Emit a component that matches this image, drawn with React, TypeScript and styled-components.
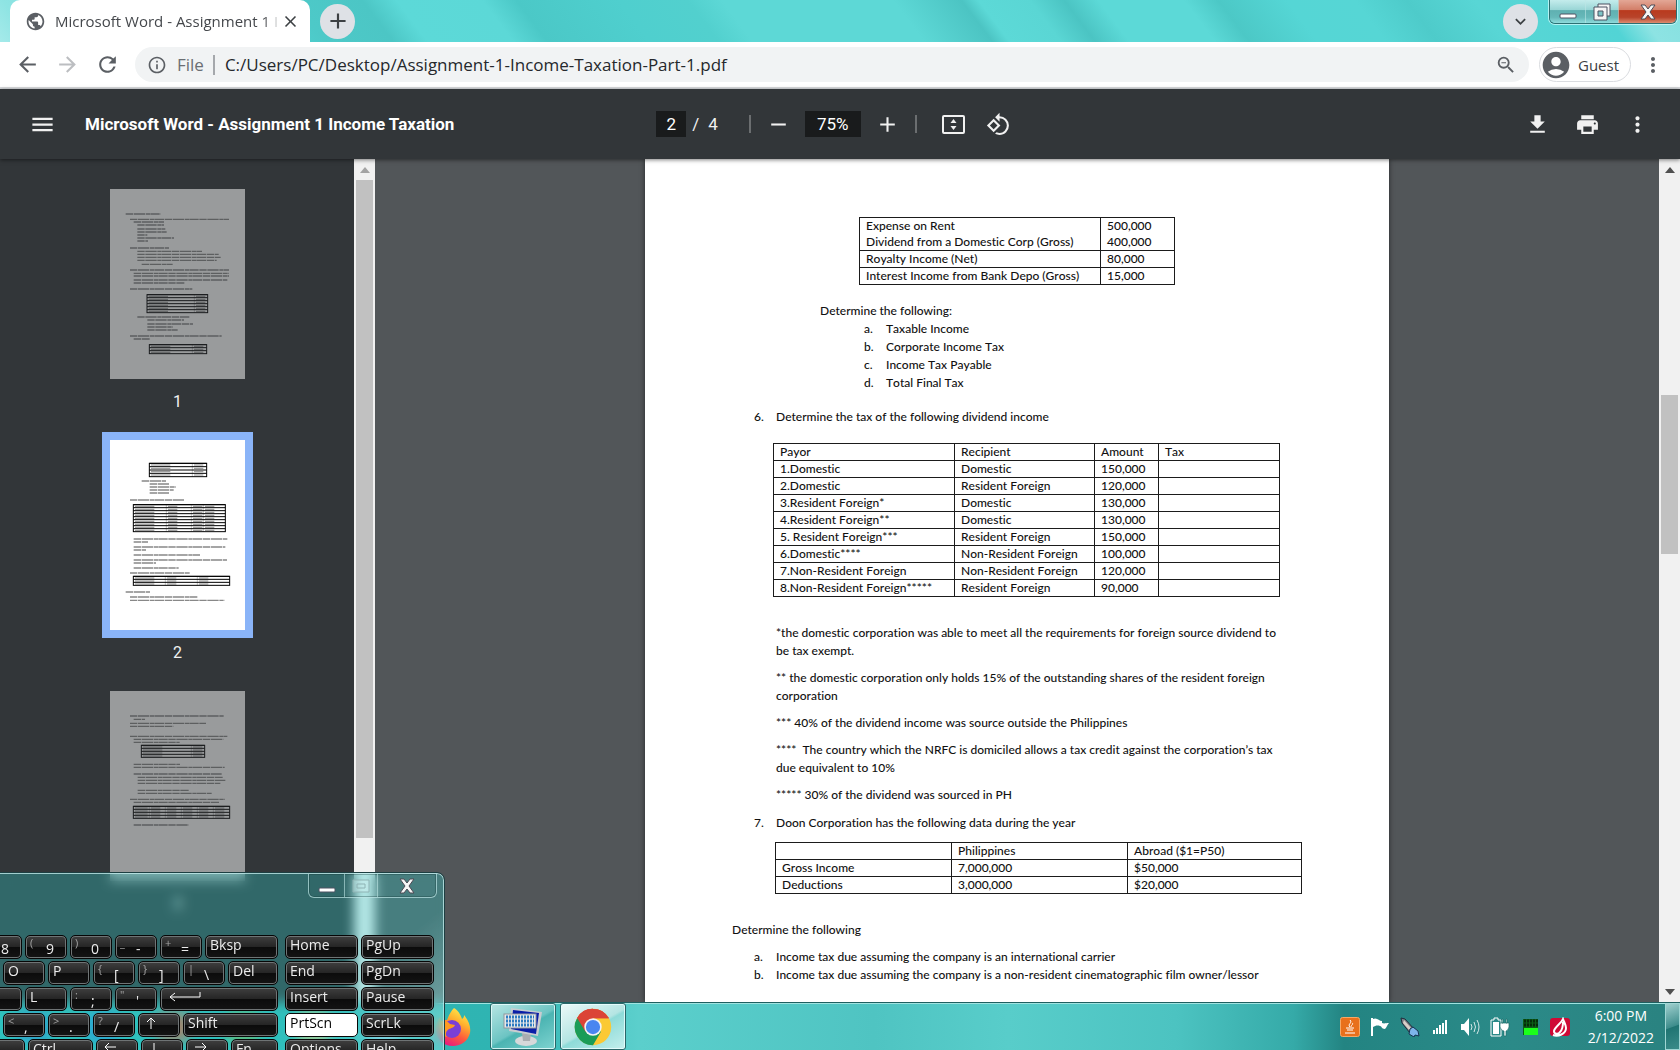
import React from "react";
import styled, { createGlobalStyle, css } from "styled-components";
import {
  MdAccountCircle,
  MdAdd,
  MdArrowBack,
  MdArrowForward,
  MdClose,
  MdInfoOutline,
  MdKeyboardArrowDown,
  MdMenu,
  MdMoreVert,
  MdPrint,
  MdPublic,
  MdRefresh,
  MdRemove,
  MdZoomOut,
} from "react-icons/md";

const uiFont = '"Open Sans", "Noto Sans", sans-serif';
const pdfFont = 'Roboto, "Liberation Sans", sans-serif';
const docFont = 'Lato, "Liberation Sans", sans-serif';

const GlobalStyle = createGlobalStyle`
  *, *::before, *::after { box-sizing: border-box; }
  body { margin: 0; overflow: hidden; font-family: ${uiFont}; }
  button, input { font: inherit; color: inherit; }
  button { border: 0; padding: 0; background: none; }
  h1, p, ol { margin: 0; padding: 0; font-weight: inherit; }
  ol { list-style: none; }
  svg { display: block; flex: none; }
`;

const Screen = styled.div`
  position: relative;
  display: flex;
  flex-direction: column;
  height: 100vh;
  overflow: hidden;
`;

/* ---------- browser frame ---------- */

const TabStrip = styled.header`
  display: flex;
  align-items: center;
  height: 42px;
  padding: 0 142px 0 10px;
  flex: none;
  background: linear-gradient(
    53deg,
    #a5eaea 0%,
    #8ee4e3 2%,
    #4fd0cf 17%,
    #4dc9c8 19%,
    #4cc6c5 23%,
    #5cd9d8 25%,
    #5cd8d7 30%,
    #4bc8c7 32%,
    #4fcfce 38%,
    #52d0ce 42%,
    #5dd8d6 44%,
    #5dd8d6 54%,
    #4cc4c3 58%,
    #5cd9d7 59%,
    #5ad6d4 62%,
    #4bc4c3 64%,
    #5cd9d7 66%,
    #5cd9d7 71%,
    #4cc8c6 73%,
    #55d6d5 77%,
    #56d6d5 81%,
    #4ecbca 84%,
    #58d6d5 88%,
    #52d4d5 95%,
    #8de3e3 97%,
    #86e0e0 100%
  );
`;

const Tab = styled.div`
  display: flex;
  align-items: center;
  width: 300px;
  height: 42px;
  padding: 0 10px 0 15px;
  background: #fff;
  border-radius: 10px 10px 0 0;
  color: #45484c;
  font-size: 15px;
  line-height: 20px;
`;

const TabTitle = styled.span`
  flex: 1;
  margin-left: 9px;
  white-space: nowrap;
  mask-image: linear-gradient(90deg, #000 92%, transparent 100%);
`;

const RoundButton = styled.button`
  display: grid;
  place-items: center;
  width: 35px;
  height: 35px;
  border-radius: 50%;
  background: #dee1e6;
  color: #3c4043;
`;

const NewTab = styled(RoundButton)`
  margin: 0 auto 0 10px;
`;

const CaptionGroup = styled.div<{ $faint?: boolean }>`
  position: absolute;
  top: 0;
  right: ${(p) => (p.$faint ? 6 : 3)}px;
  display: flex;
  height: 24px;
  border: 1px solid ${(p) => (p.$faint ? "rgba(190,230,230,.7)" : "#2c6f72")};
  border-top: 0;
  border-radius: 0 0 6px 6px;
  overflow: hidden;
  box-shadow: ${(p) => (p.$faint ? "inset 0 0 0 1px rgba(20,60,60,.35)" : "0 0 0 1px rgba(220,255,255,.7)")};
`;

const CaptionButton = styled.button<{ $width: number; $tone?: "red" | "clear" }>`
  display: grid;
  place-items: center;
  width: ${(p) => p.$width}px;
  & + & { border-left: 1px solid ${(p) => (p.$tone === "clear" ? "rgba(190,230,230,.6)" : "#3a7f82")}; }
  background: ${(p) =>
    p.$tone === "red"
      ? "linear-gradient(#e3a796, #d37f69 42%, #b93a1e 46%, #b8432a 75%, #dc8c70)"
      : p.$tone === "clear"
        ? "none"
        : "linear-gradient(#c4ecec, #9ad6d6 42%, #5fb0b1 46%, #66b8b9 75%, #8fdcdc)"};
`;

const AddressBar = styled.nav`
  display: flex;
  align-items: center;
  height: 47px;
  padding: 0 15px;
  flex: none;
  background: #fff;
  border-bottom: 2px solid #d9dbde;
  color: #5b5f64;
`;

const NavButtons = styled.div`
  display: flex;
  gap: 15px;
  margin-right: 15px;
`;

const IconButton = styled.button<{ $muted?: boolean }>`
  display: grid;
  place-items: center;
  min-width: 25px;
  height: 26px;
  color: ${(p) => (p.$muted ? "#bcbec1" : "inherit")};
`;

const Omnibox = styled.label`
  display: flex;
  align-items: center;
  flex: 1;
  height: 35px;
  padding: 0 12px;
  border-radius: 18px;
  background: #f1f3f4;
  font-size: 17px;
  line-height: 24px;
`;

const Scheme = styled.span`
  padding: 0 9px 0 10px;
  border-right: 2px solid #a5a8ac;
  line-height: 20px;
  color: #6a6e73;
`;

const UrlInput = styled.input`
  flex: 1;
  min-width: 0;
  padding: 0 0 0 10px;
  border: 0;
  background: none;
  color: #25282c;
`;

const Profile = styled.button`
  display: flex;
  align-items: center;
  gap: 6px;
  width: 92px;
  height: 35px;
  margin: 0 9px 0 10px;
  border: 1px solid #dadce0;
  border-radius: 18px;
  font-size: 15px;

  span { color: #3c4043; }
`;

/* ---------- pdf viewer ---------- */

const PdfToolbar = styled.div`
  position: relative;
  z-index: 1;
  display: grid;
  grid-template-columns: 1fr auto 1fr;
  align-items: center;
  height: 70px;
  padding: 0 30px 0 29px;
  flex: none;
  background: #323639;
  box-shadow: 0 1px 4px rgba(0, 0, 0, 0.5);
  color: #f1f1f1;
  font-family: ${pdfFont};
  font-size: 17px;
`;

const ToolGroup = styled.div<{ $gap: number; $end?: boolean }>`
  display: flex;
  align-items: center;
  gap: ${(p) => p.$gap}px;
  justify-content: ${(p) => (p.$end ? "flex-end" : "flex-start")};
`;

const CentreTools = styled(ToolGroup)`
  padding-right: 12px;
`;

const ViewTools = styled(ToolGroup)`
  padding-left: 9px;
`;

const DocTitle = styled.h1`
  font-size: 17px;
  font-weight: 700;
  line-height: 24px;
  color: #fff;
  white-space: nowrap;
`;

const ToolInput = styled.input<{ $width: number }>`
  width: ${(p) => p.$width}px;
  height: 26px;
  padding: 0;
  border: 0;
  background: #191b1c;
  color: #fff;
  text-align: center;
`;

const PageCount = styled.span`
  display: flex;
  gap: 9px;
  margin: 0 16px 0 -8px;
`;

const Rule = styled.span`
  width: 2px;
  height: 18px;
  margin: 0 1px;
  background: #6b6e70;
`;

const Viewer = styled.div`
  display: flex;
  flex: 1;
  min-height: 0;
  background: #525659;
`;

const Sidebar = styled.aside`
  width: 354px;
  flex: none;
  padding: 22px 0 0 102px;
  overflow: hidden;
  background: #323639;
`;

const ThumbItem = styled.figure`
  width: 151px;
  margin: 0 0 15px;
  color: #f1f1f1;
  font-family: ${pdfFont};
  font-size: 16px;
  line-height: 30px;
  text-align: center;
`;

const ThumbFrame = styled.div<{ $current?: boolean }>`
  padding: 8px;
  background: ${(p) => (p.$current ? "#8ab4f8" : "none")};
  svg { background: #fff; opacity: ${(p) => (p.$current ? 1 : 0.5)}; }
`;

const Scrollbar = styled.div<{ $arrow: string }>`
  display: flex;
  flex-direction: column;
  align-items: center;
  width: 21px;
  flex: none;
  background: #f1f1f1;
  color: ${(p) => p.$arrow};
`;

const ScrollArrow = styled.button`
  display: grid;
  place-items: center;
  width: 21px;
  height: 21px;
  flex: none;
`;

const ScrollTrack = styled.div`
  flex: 1;
  width: 17px;
`;

const ScrollThumb = styled.div`
  background: #c1c1c1;
`;

const PageArea = styled.main`
  flex: 1;
  display: flex;
  justify-content: center;
  overflow: hidden;
`;

const Page = styled.article`
  width: 744px;
  flex: none;
  padding: 58px 87px 0;
  background: #fff;
  box-shadow: 0 0 5px rgba(0, 0, 0, 0.55);
  color: #111;
  font-family: ${docFont};
  font-size: 12px;
  font-weight: 500;
  font-kerning: none;
  font-variant-ligatures: none;
  line-height: 18px;
`;

const Table = styled.table<{ $left: number; $top?: number }>`
  margin: ${(p) => p.$top ?? 0}px 0 0 ${(p) => p.$left}px;
  table-layout: fixed;
  border-collapse: collapse;
  line-height: 16px;
  td, th {
    height: 17px;
    padding: 0 0 0 6px;
    border: 1px solid #1b1b1b;
    font-weight: inherit;
    text-align: left;
    white-space: nowrap;
  }
`;

const Line = styled.p<{ $top: number; $left?: number }>`
  margin: ${(p) => p.$top}px 0 0 ${(p) => p.$left ?? 0}px;
`;

const List = styled.ol<{ $left: number; $top?: number }>`
  margin: ${(p) => p.$top ?? 0}px 0 0 ${(p) => p.$left}px;
  li { display: flex; white-space: nowrap; }
  li > span { width: 22px; flex: none; }
`;

const Notes = styled.div`
  display: flex;
  flex-direction: column;
  gap: 9px;
  margin: 27px 0 0 44px;
  p { white-space: pre; }
`;

/* ---------- taskbar ---------- */

const Taskbar = styled.footer`
  display: flex;
  align-items: center;
  height: 48px;
  flex: none;
  border-top: 1px solid #1f5f60;
  box-shadow: inset 0 1px 0 #9fe3e0;
  background: linear-gradient(90deg, #2fb8b5 0, #2fb4b2 30%, #5bcfcc 38%, #4fc4c2 52%, #58cdca 60%, #4cc3c1 70%, #35aaa8 77%, #238482 80%, #2b8a88 90%, #2a8280 100%);
  color: #fff;
`;

const TaskItem = styled.button<{ $open?: boolean; $active?: boolean }>`
  display: grid;
  place-items: center;
  width: 66px;
  height: 47px;
  margin-right: 4px;
  border-radius: 3px;
  ${(p) =>
    p.$open &&
    css`
      border: 1px solid #2a6668;
      box-shadow: inset 0 0 0 1px rgba(235, 255, 255, 0.8);
      background: ${p.$active
        ? "linear-gradient(150deg, #ecf9f8 0, #b4e5e3 50%, #8edbd8 54%, #c4efed 100%)"
        : "linear-gradient(150deg, #b8e6e4 0, #6cc4c3 50%, #4bb4b2 54%, #7fd4d1 100%)"};
    `}
`;

const Tray = styled.div`
  display: flex;
  align-items: center;
  gap: 10px;
  margin-left: auto;
  height: 100%;
`;

const Clock = styled.time`
  display: flex;
  flex-direction: column;
  align-items: center;
  margin: 0 1px 0 8px;
  font-size: 14px;
  line-height: 22px;
`;

const ShowDesktop = styled.button`
  width: 15px;
  height: 47px;
  border: 1px solid #9fd6d4;
  background: linear-gradient(160deg, #9fcfce, #3d8d8c 50%, #1f7472 52%, #3a8c8a);
`;

/* ---------- on-screen keyboard ---------- */

const Keyboard = styled.section`
  position: absolute;
  left: 0;
  bottom: 0;
  width: 444px;
  height: 177px;
  padding: 61px 9px 0 0;
  overflow: hidden;
  border: solid rgba(200, 240, 240, 0.75);
  border-width: 1px 1px 0 0;
  border-radius: 0 7px 0 0;
  outline: 1px solid #1d3f42;
  background: linear-gradient(140deg, rgba(50, 212, 208, 0) 74%, rgba(230, 255, 255, 0.22) 90%), rgba(50, 212, 208, 0.32);
  backdrop-filter: blur(6px);
`;

const KeyGrid = styled.div`
  display: flex;
  justify-content: flex-end;
  gap: 7px;
`;

const KeyBlock = styled.div<{ $width: number }>`
  display: flex;
  flex-direction: column;
  gap: 2px;
  width: ${(p) => p.$width}px;
  flex: none;
`;

const KeyRow = styled.div`
  display: flex;
  justify-content: flex-end;
  gap: 3px;
`;

const KeyCap = styled.button<{ $width: number; $lit?: boolean }>`
  display: flex;
  align-items: flex-start;
  width: ${(p) => p.$width}px;
  height: 24px;
  padding: 0 4px;
  flex: none;
  border: 1px solid #060606;
  border-radius: 5px;
  box-shadow: inset 0 0 0 1px ${(p) => (p.$lit ? "#fff" : "#6f7475")};
  background: ${(p) => (p.$lit ? "#fff" : "linear-gradient(#3f3f3f, #262626 48%, #0c0c0c 52%, #141414)")};
  color: ${(p) => (p.$lit ? "#000" : "#ececec")};
  font-size: 14px;
  line-height: 17px;
  white-space: nowrap;

  small {
    width: 16px;
    font-size: 11px;
    line-height: 14px;
    color: #a5a5a5;
    text-align: left;
  }
  sub {
    align-self: flex-end;
    line-height: 18px;
    vertical-align: baseline;
    font-size: 14px;
  }
`;

/* ---------- drawings ---------- */

type Seg = [number, number, number];
type Grid = { x: number; y: number; w: number; rows: number; step: number; cols: number[] };

const pageOne: Seg[] = [
  [47, 75, 105], [60, 91, 297], [71, 99, 91], [82, 108, 80], [82, 120, 84], [82, 129, 88], [82, 138, 30],
  [82, 147, 110], [82, 156, 32], [60, 177, 117], [82, 187, 194], [82, 196, 244], [82, 205, 250], [82, 214, 238],
  [95, 226, 93], [60, 243, 297], [71, 253, 285], [71, 261, 286], [71, 273, 282], [71, 282, 152], [60, 300, 187],
  [82, 384, 156], [112, 393, 110], [112, 405, 137], [112, 414, 76], [112, 423, 91], [60, 441, 275], [71, 450, 48],
];
const pageTwo: Seg[] = [
  [95, 123, 73], [119, 132, 59], [119, 141, 78], [119, 150, 72], [119, 159, 60], [60, 180, 164], [71, 297, 282],
  [71, 306, 43], [71, 321, 275], [71, 330, 37], [71, 345, 199], [71, 360, 280], [71, 369, 67], [71, 384, 135],
  [60, 399, 180], [47, 456, 73], [60, 471, 202], [60, 481, 283],
];
const pageThree: Seg[] = [
  [60, 75, 281], [71, 85, 34], [60, 97, 228], [60, 106, 130], [60, 136, 292], [71, 145, 269], [71, 154, 138],
  [71, 220, 139], [71, 229, 273], [71, 249, 264], [83, 259, 255], [83, 268, 263], [83, 277, 248], [83, 298, 153],
  [83, 307, 222], [60, 325, 284], [71, 334, 256], [71, 402, 165],
];
const gridsOne: Grid[] = [
  { x: 111, y: 317, w: 182, rows: 6, step: 9, cols: [142] },
  { x: 118, y: 467, w: 172, rows: 3, step: 9, cols: [129] },
];
const gridsTwo: Grid[] = [
  { x: 118, y: 70, w: 172, rows: 4, step: 10, cols: [129] },
  { x: 70, y: 194, w: 276, rows: 9, step: 9, cols: [99, 174, 210] },
  { x: 70, y: 409, w: 289, rows: 3, step: 9, cols: [96, 192] },
];
const gridsThree: Grid[] = [
  { x: 94, y: 163, w: 190, rows: 4, step: 9, cols: [150] },
  { x: 70, y: 346, w: 289, rows: 4, step: 9, cols: [48, 96, 144, 192, 240] },
];

function Miniature({ lines, grids }: { lines: Seg[]; grids: Grid[] }) {
  return (
    <svg width="135" height="190" viewBox="0 0 405 570" aria-hidden="true">
      {lines.map(([x, y, w], i) => (
        <path key={i} d={`M${x} ${y}h${w}`} stroke="#111" strokeOpacity=".5" strokeWidth="4" strokeDasharray="22 2 34 2 13 1 28 2" />
      ))}
      {grids.map((g, i) => (
        <g key={i} stroke="#000" strokeWidth="3" fill="none">
          <rect x={g.x} y={g.y} width={g.w} height={g.rows * g.step} />
          {Array.from({ length: g.rows }, (_, r) => (
            <React.Fragment key={r}>
              <path d={`M${g.x} ${g.y + r * g.step}h${g.w}`} />
              {[0, ...g.cols].map((c, k) => (
                <path
                  key={k}
                  d={`M${g.x + c + 5} ${g.y + r * g.step + 5}h${k === 0 ? Math.min(58, g.cols[0] - 10) : 28}`}
                  strokeOpacity=".45"
                />
              ))}
            </React.Fragment>
          ))}
          {g.cols.map((c) => (
            <path key={c} d={`M${g.x + c} ${g.y}v${g.rows * g.step}`} strokeWidth="2" strokeOpacity=".35" />
          ))}
        </g>
      ))}
    </svg>
  );
}

const MinimizeGlyph = () => (
  <svg width="18" height="16" viewBox="0 0 18 16"><rect x="1" y="10" width="16" height="4" rx="1" fill="#fff" stroke="#4d5263" /></svg>
);
const RestoreGlyph = () => (
  <svg width="18" height="18" viewBox="0 0 18 18" fill="#f5f5f5" stroke="#4d5263">
    <path d="M5 1h12v12H5z" />
    <path d="M1 4h13v13H1z" />
    <path d="M5 8h5v5H5z" fill="#7dc4c6" />
  </svg>
);
const MaximizeGlyph = () => (
  <svg width="18" height="14" viewBox="0 0 18 14" fill="none" stroke="#8fb3b4">
    <path d="M1 1h16v12H1z" fill="rgba(220,245,245,.35)" />
    <path d="M5 5h8v4H5z" />
  </svg>
);
const CloseGlyph = () => (
  <svg width="18" height="16" viewBox="0 0 18 16">
    <path d="M2 1h4l3 4 3-4h4l-5 7 5 7h-4l-3-4-3 4H2l5-7z" fill="#f6f6f6" stroke="#4d4a55" />
  </svg>
);
const FitGlyph = () => (
  <svg width="25" height="21" viewBox="0 0 25 21" fill="#f1f1f1">
    <rect x="2" y="2" width="21" height="17" rx="1" fill="none" stroke="#f1f1f1" strokeWidth="2" />
    <path d="M12.500 5l3 4h-6zM12.500 16l3-4h-6z" />
  </svg>
);
const RotateGlyph = () => (
  <svg width="25" height="25" viewBox="0 0 24 24" fill="#f1f1f1">
    <path d="M7.340 6.410L.860 12.900l6.490 6.480 6.490-6.480-6.500-6.490zM3.690 12.900l3.660-3.660L11 12.900l-3.660 3.660-3.650-3.660zm15.670-6.260A8.950 8.950 0 0 0 13 4V.760L8.760 5 13 9.240V6c1.790 0 3.580.680 4.950 2.050a7 7 0 0 1 0 9.900 6.970 6.970 0 0 1-7.790 1.440l-1.490 1.490C10.020 21.620 11.510 22 13 22c2.300 0 4.610-.880 6.360-2.640a8.980 8.980 0 0 0 0-12.720z" />
  </svg>
);
const DownloadGlyph = () => (
  <svg width="25" height="25" viewBox="0 0 24 24" fill="#f1f1f1"><path d="M19 9h-4V3H9v6H5l7 7 7-7zM5 18v2h14v-2H5z" /></svg>
);
const Arrow = ({ down }: { down?: boolean }) => (
  <svg width="10" height="6" viewBox="0 0 10 6"><path d={down ? "M0 0h10L5 6z" : "M0 6h10L5 0z"} fill="currentColor" /></svg>
);

const FirefoxIcon = () => (
  <svg width="38" height="40" viewBox="0 0 38 40">
    <defs>
      <linearGradient id="fox" x1="0.8" y1="0" x2="0.3" y2="1">
        <stop offset="0" stopColor="#fff44f" /><stop offset=".35" stopColor="#ffb02e" />
        <stop offset=".65" stopColor="#ff5a3c" /><stop offset="1" stopColor="#e31587" />
      </linearGradient>
    </defs>
    <path d="M20 1c5 3 7 8 8 11 2-1 2-3 2-4 5 6 7 12 6 18-2 8-9 13-17 13C9 39 2 32 2 22c0-5 2-9 4-12l1 5c2-2 4-2 6-2 2-5 4-9 7-12z" fill="url(#fox)" />
    <circle cx="18" cy="22" r="9" fill="#7a3fd6" />
    <path d="M5 15c4-2 9-1 11 2l5 1c-1 3-4 3-6 4-3 2-4 5-2 8-5-1-8-6-8-15z" fill="#ff9a1f" />
  </svg>
);
const OskIcon = () => (
  <svg width="40" height="40" viewBox="0 0 40 40">
    <ellipse cx="23" cy="34" rx="11" ry="5" fill="#d6d8da" />
    <path d="M19 26h9l-1 8h-7z" fill="#aaadb1" />
    <path d="M8 1l31 4-4 24L6 24z" fill="#c8ccd0" />
    <path d="M10 3l26 3-3 21L8 22z" fill="#0a1ea8" />
    <rect x="1" y="7" width="32" height="14" fill="#e6e8ea" stroke="#8f979e" />
    <path d="M3 10h28M3 14h28M3 18h28" stroke="#2e7cc0" strokeWidth="3" strokeDasharray="2 1" />
  </svg>
);
const ChromeIcon = () => (
  <svg width="38" height="38" viewBox="0 0 48 48">
    <circle cx="24" cy="24" r="23" fill="#fbc934" />
    <path d="M24 24 4 12.500A23 23 0 0 1 44 13H24z" fill="#db4437" />
    <path d="M4 12.500A23 23 0 0 0 24 47l10-17-10-6z" fill="#1a9c57" />
    <path d="M4 12.500 14.500 30 24 24V13h20A23 23 0 0 0 4 12.500z" fill="#db4437" />
    <circle cx="24" cy="24" r="11" fill="#f4f4f4" />
    <circle cx="24" cy="24" r="9" fill="#4a86f0" />
  </svg>
);
const PinnedIcon = ({ color }: { color: string }) => (
  <svg width="36" height="36" viewBox="0 0 36 36"><rect x="2" y="4" width="32" height="28" rx="6" fill={color} /></svg>
);

const JavaIcon = () => (
  <svg width="20" height="20" viewBox="0 0 20 20">
    <rect x="0.500" y="0.500" width="19" height="19" rx="2" fill="#e8701c" stroke="#f6a866" />
    <path d="M10 3c3 3-3 4 0 7M12 6c2 1-1 2-1 4M6 11h8M7 13h6M5 16h10" stroke="#fff" fill="none" />
  </svg>
);
const FlagIcon = () => (
  <svg width="20" height="20" viewBox="0 0 20 20"><path d="M2 1v18" stroke="#fff" strokeWidth="2" /><path d="M3 2c4-2 6 2 9 2v2c2 1 4 0 7 0-2 2-2 4-4 6-4 0-3-3-5-3-3-1-5 0-7 1z" fill="#fff" /></svg>
);
const PenIcon = () => (
  <svg width="20" height="20" viewBox="0 0 20 20">
    <path d="M1 1l4 1 9 10-4 4L2 6z" fill="#7f8288" stroke="#1e2d3c" />
    <path d="M4 3l7 8-2 2-6-7z" fill="#d8d0c8" />
    <path d="M10 12l3-2 5 4 1 5-4-1-1 2-5-3z" fill="#7db4ea" stroke="#16334f" />
  </svg>
);
const SignalIcon = () => (
  <svg width="20" height="20" viewBox="0 0 20 20" fill="#fff"><path d="M3 13h2v4H3zM6 11h2v6H6zM9 8h2v9H9zM12 6h2v11h-2zM15 3h2v14h-2z" /></svg>
);
const SpeakerIcon = () => (
  <svg width="20" height="20" viewBox="0 0 20 20"><path d="M1 7h3l5-6v18l-5-6H1z" fill="#fff" /><path d="M11 7q2 3 0 6M14 5q3 5 0 10M17 3q4 7 0 14" stroke="#fff" fill="none" strokeOpacity=".8" /></svg>
);
const BatteryIcon = () => (
  <svg width="20" height="20" viewBox="0 0 20 20">
    <path d="M4 1h4v2h3v16H1V3h3z" fill="none" stroke="#fff" />
    <path d="M3 5h6v12H3z" fill="#fff" />
    <path d="M10 6h9v4q-1 4-3 4v5h-2v-5q-3 0-4-4zM12 2h1v4h-1zM16 2h1v4h-1z" fill="#fff" stroke="#1c6e6c" strokeWidth=".7" />
  </svg>
);
const MeterIcon = () => (
  <svg width="20" height="20" viewBox="0 0 20 20"><path d="M3 2h15v16H3z" fill="#0c5f16" /><path d="M4 11h14v7H4z" fill="#1bff1b" /><path d="M4 4h14M4 8h14" stroke="#052b08" strokeDasharray="2 1" strokeWidth="3" /></svg>
);
const LeafIcon = () => (
  <svg width="20" height="20" viewBox="0 0 20 20"><rect y="1" width="20" height="18" rx="3" fill="#cf0a35" /><path d="M3 18c5 2 13-1 13-7 0-3-2-6-3-9-2 5-8 7-9 12 0 3 4 4 6 1 2-2 3-6 3-10" fill="none" stroke="#fff" strokeWidth="2" /></svg>
);

/* ---------- data ---------- */

const dividends: string[][] = [
  ["1.Domestic", "Domestic", "150,000"],
  ["2.Domestic", "Resident Foreign", "120,000"],
  ["3.Resident Foreign*", "Domestic", "130,000"],
  ["4.Resident Foreign**", "Domestic", "130,000"],
  ["5. Resident Foreign***", "Resident Foreign", "150,000"],
  ["6.Domestic****", "Non-Resident Foreign", "100,000"],
  ["7.Non-Resident Foreign", "Non-Resident Foreign", "120,000"],
  ["8.Non-Resident Foreign*****", "Resident Foreign", "90,000"],
];

const notes = [
  "*the domestic corporation was able to meet all the requirements for foreign source dividend to\nbe tax exempt.",
  "** the domestic corporation only holds 15% of the outstanding shares of the resident foreign\ncorporation",
  "*** 40% of the dividend income was source outside the Philippines",
  "****  The country which the NRFC is domiciled allows a tax credit against the corporation’s tax\ndue equivalent to 10%",
  "***** 30% of the dividend was sourced in PH",
];

type KeyDef = { label?: string; shift?: string; base?: string; w?: number; arrow?: string };
const k = (shift: string, base: string): KeyDef => ({ shift, base });
const l = (label: string, w?: number): KeyDef => ({ label, w });

const mainKeys: KeyDef[][] = [
  [k("*", "8"), k("(", "9"), k(")", "0"), k("_", "-"), k("+", "="), l("Bksp", 73)],
  [l("O"), l("P"), k("{", "["), k("}", "]"), k("|", "\\"), l("Del", 50)],
  [l(""), l("L"), k(":", ";"), k('"', "'"), { arrow: "M5 9h30V4M10 5L5 9l5 4", w: 118 }],
  [k("<", ","), k(">", "."), k("?", "/"), { arrow: "M8 15V4M4 8l4-4 4 4" }, l("Shift", 95)],
  [l("", 42), l("Ctrl", 65), { arrow: "M4 7h11M8 3L4 7l4 4" }, { arrow: "M8 3v11M4 10l4 4 4-4" }, { arrow: "M4 7h11M11 3l4 4-4 4" }, l("Fn", 47)],
];
const sideKeys = [["Home", "PgUp"], ["End", "PgDn"], ["Insert", "Pause"], ["PrtScn", "ScrLk"], ["Options", "Help"]];

function Key({ def }: { def: KeyDef }) {
  const width = def.w ?? 42;
  return (
    <KeyCap $width={width}>
      {def.arrow && (
        <svg width="36" height="18" viewBox="0 0 36 18"><path d={def.arrow} fill="none" stroke="#fff" /></svg>
      )}
      {def.label}
      {def.shift && <small>{def.shift}</small>}
      {def.base && <sub>{def.base}</sub>}
    </KeyCap>
  );
}

function DocumentPage() {
  return (
    <Page>
      <Table $left={127}>
        <colgroup><col width="241" /><col width="74" /></colgroup>
        <tbody>
          <tr><td>Expense on Rent<br />Dividend from a Domestic Corp (Gross)</td><td>500,000<br />400,000</td></tr>
          <tr><td>Royalty Income (Net)</td><td>80,000</td></tr>
          <tr><td>Interest Income from Bank Depo (Gross)</td><td>15,000</td></tr>
        </tbody>
      </Table>
      <Line $top={17} $left={88}>Determine the following:</Line>
      <List $left={132}>
        <li><span>a.</span>Taxable Income</li>
        <li><span>b.</span>Corporate Income Tax</li>
        <li><span>c.</span>Income Tax Payable</li>
        <li><span>d.</span>Total Final Tax</li>
      </List>
      <List $left={22} $top={16}>
        <li><span>6.</span>Determine the tax of the following dividend income</li>
      </List>
      <Table $left={41} $top={17}>
        <colgroup><col width="181" /><col width="140" /><col width="64" /><col width="121" /></colgroup>
        <thead><tr><th>Payor</th><th>Recipient</th><th>Amount</th><th>Tax</th></tr></thead>
        <tbody>
          {dividends.map((row) => (
            <tr key={row[0]}>{row.map((cell, i) => <td key={i}>{cell}</td>)}<td /></tr>
          ))}
        </tbody>
      </Table>
      <Notes>{notes.map((n) => <p key={n}>{n}</p>)}</Notes>
      <List $left={22} $top={10}>
        <li><span>7.</span>Doon Corporation has the following data during the year</li>
      </List>
      <Table $left={43} $top={10}>
        <colgroup><col width="176" /><col width="176" /><col width="174" /></colgroup>
        <thead><tr><th /><th>Philippines</th><th>Abroad ($1=P50)</th></tr></thead>
        <tbody>
          <tr><td>Gross Income</td><td>7,000,000</td><td>$50,000</td></tr>
          <tr><td>Deductions</td><td>3,000,000</td><td>$20,000</td></tr>
        </tbody>
      </Table>
      <Line $top={27}>Determine the following</Line>
      <List $left={22} $top={9}>
        <li><span>a.</span>Income tax due assuming the company is an international carrier</li>
        <li><span>b.</span>Income tax due assuming the company is a non-resident cinematographic film owner/lessor</li>
      </List>
    </Page>
  );
}

export default function App() {
  return (
    <Screen>
      <GlobalStyle />
      <TabStrip>
        <Tab>
          <MdPublic size={21} color="#5b5f64" />
          <TabTitle>Microsoft Word - Assignment 1 I</TabTitle>
          <button aria-label="Close tab"><MdClose size={19} color="#3c4043" /></button>
        </Tab>
        <NewTab aria-label="New tab"><MdAdd size={26} /></NewTab>
        <RoundButton aria-label="Search tabs"><MdKeyboardArrowDown size={21} /></RoundButton>
        <CaptionGroup>
          <CaptionButton $width={35} aria-label="Minimize"><MinimizeGlyph /></CaptionButton>
          <CaptionButton $width={33} aria-label="Restore"><RestoreGlyph /></CaptionButton>
          <CaptionButton $width={58} $tone="red" aria-label="Close"><CloseGlyph /></CaptionButton>
        </CaptionGroup>
      </TabStrip>

      <AddressBar>
        <NavButtons>
          <IconButton aria-label="Back"><MdArrowBack size={25} /></IconButton>
          <IconButton $muted aria-label="Forward"><MdArrowForward size={25} /></IconButton>
          <IconButton aria-label="Reload"><MdRefresh size={25} /></IconButton>
        </NavButtons>
        <Omnibox>
          <MdInfoOutline size={20} />
          <Scheme>File</Scheme>
          <UrlInput aria-label="Address" defaultValue="C:/Users/PC/Desktop/Assignment-1-Income-Taxation-Part-1.pdf" />
          <MdZoomOut size={22} />
        </Omnibox>
        <Profile><MdAccountCircle size={32} /><span>Guest</span></Profile>
        <IconButton aria-label="Menu"><MdMoreVert size={24} /></IconButton>
      </AddressBar>

      <PdfToolbar>
        <ToolGroup $gap={29}>
          <IconButton aria-label="Toggle sidebar"><MdMenu size={27} /></IconButton>
          <DocTitle>Microsoft Word - Assignment 1 Income Taxation</DocTitle>
        </ToolGroup>
        <CentreTools $gap={14}>
          <ToolInput $width={30} aria-label="Page number" defaultValue="2" />
          <PageCount><span>/</span><span>4</span></PageCount>
          <Rule />
          <IconButton aria-label="Zoom out"><MdRemove size={25} /></IconButton>
          <ToolInput $width={56} aria-label="Zoom level" defaultValue="75%" />
          <IconButton aria-label="Zoom in"><MdAdd size={25} /></IconButton>
          <Rule />
          <ViewTools $gap={20}>
            <IconButton aria-label="Fit to page"><FitGlyph /></IconButton>
            <IconButton aria-label="Rotate"><RotateGlyph /></IconButton>
          </ViewTools>
        </CentreTools>
        <ToolGroup $gap={25} $end>
          <IconButton aria-label="Download"><DownloadGlyph /></IconButton>
          <IconButton aria-label="Print"><MdPrint size={25} /></IconButton>
          <IconButton aria-label="More actions"><MdMoreVert size={25} /></IconButton>
        </ToolGroup>
      </PdfToolbar>

      <Viewer>
        <Sidebar>
          <ThumbItem><ThumbFrame><Miniature lines={pageOne} grids={gridsOne} /></ThumbFrame>1</ThumbItem>
          <ThumbItem><ThumbFrame $current><Miniature lines={pageTwo} grids={gridsTwo} /></ThumbFrame>2</ThumbItem>
          <ThumbItem><ThumbFrame><Miniature lines={pageThree} grids={gridsThree} /></ThumbFrame>3</ThumbItem>
        </Sidebar>
        <Scrollbar $arrow="#a3a3a3">
          <ScrollArrow aria-label="Scroll thumbnails up"><Arrow /></ScrollArrow>
          <ScrollTrack><ScrollThumb style={{ height: "80%" }} /></ScrollTrack>
        </Scrollbar>
        <PageArea><DocumentPage /></PageArea>
        <Scrollbar $arrow="#505050">
          <ScrollArrow aria-label="Scroll up"><Arrow /></ScrollArrow>
          <ScrollTrack style={{ paddingTop: 215 }}><ScrollThumb style={{ height: 159 }} /></ScrollTrack>
          <ScrollArrow aria-label="Scroll down"><Arrow down /></ScrollArrow>
        </Scrollbar>
      </Viewer>

      <Taskbar>
        <TaskItem aria-label="Start"><PinnedIcon color="#2f86c9" /></TaskItem>
        <TaskItem aria-label="Browser"><PinnedIcon color="#2a8fd6" /></TaskItem>
        <TaskItem aria-label="Media"><PinnedIcon color="#d9603f" /></TaskItem>
        <TaskItem aria-label="Spreadsheet"><PinnedIcon color="#7fb04a" /></TaskItem>
        <TaskItem aria-label="Explorer"><PinnedIcon color="#e5c86a" /></TaskItem>
        <TaskItem aria-label="Mail"><PinnedIcon color="#8cc4e8" /></TaskItem>
        <TaskItem aria-label="Firefox"><FirefoxIcon /></TaskItem>
        <TaskItem $open aria-label="On-Screen Keyboard"><OskIcon /></TaskItem>
        <TaskItem $open $active aria-label="Chrome"><ChromeIcon /></TaskItem>
        <Tray>
          <JavaIcon /><FlagIcon /><PenIcon /><SignalIcon /><SpeakerIcon /><BatteryIcon /><MeterIcon /><LeafIcon />
          <Clock><span>6:00 PM</span><span>2/12/2022</span></Clock>
          <ShowDesktop aria-label="Show desktop" />
        </Tray>
      </Taskbar>

      <Keyboard aria-label="On-Screen Keyboard">
        <CaptionGroup $faint>
          <CaptionButton $width={35} $tone="clear" aria-label="Minimize keyboard"><MinimizeGlyph /></CaptionButton>
          <CaptionButton $width={33} $tone="clear" aria-label="Maximize keyboard"><MaximizeGlyph /></CaptionButton>
          <CaptionButton $width={59} $tone="clear" aria-label="Close keyboard"><CloseGlyph /></CaptionButton>
        </CaptionGroup>
        <KeyGrid>
          <KeyBlock $width={278}>
            {mainKeys.map((row, i) => <KeyRow key={i}>{row.map((def, j) => <Key key={j} def={def} />)}</KeyRow>)}
          </KeyBlock>
          <KeyBlock $width={149}>
            {sideKeys.map((row) => (
              <KeyRow key={row[0]}>
                {row.map((name) => <KeyCap key={name} $width={73} $lit={name === "PrtScn"}>{name}</KeyCap>)}
              </KeyRow>
            ))}
          </KeyBlock>
        </KeyGrid>
      </Keyboard>
    </Screen>
  );
}
